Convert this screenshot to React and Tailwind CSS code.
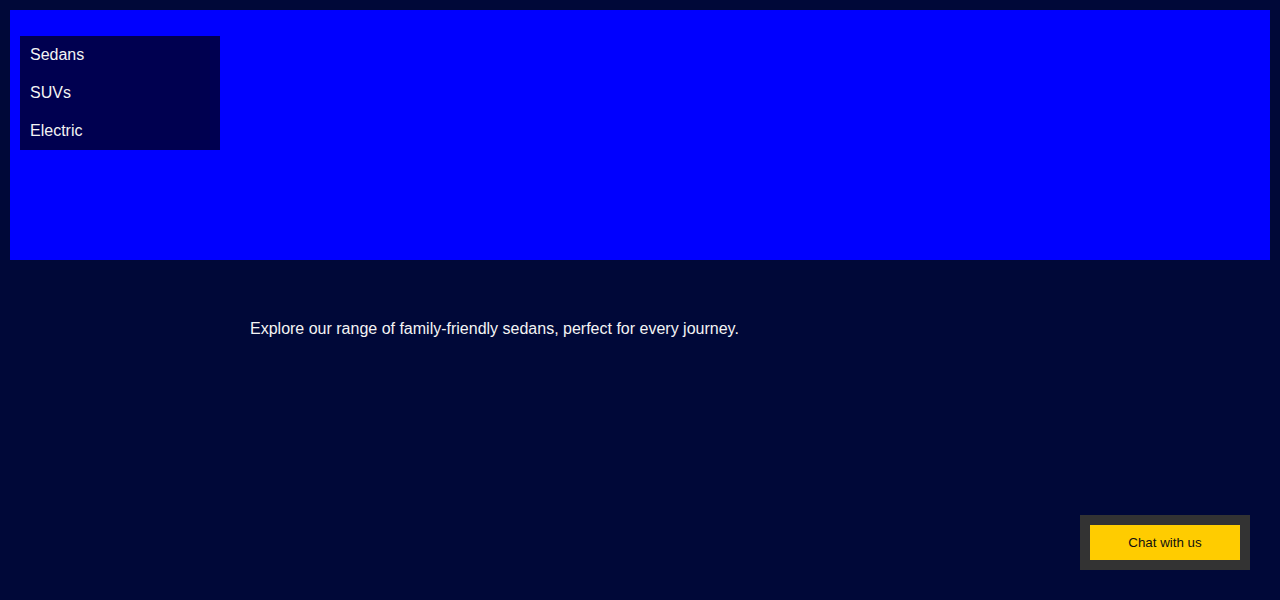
const MENU = ['Sedans', 'SUVs', 'Electric'];

export default function App() {
  return (
    <div className="min-h-[600px] bg-[#000838] p-[10px] font-['Liberation_Sans',Arial,sans-serif] text-[#f4f4f4]">
      <header className="h-[250px] bg-[#0000ff] px-[10px] pt-[26px]">
        <nav className="w-[200px] bg-[#000050]">
          {MENU.map((item) => (
            <div key={item} className="h-[38px] px-[10px] pt-[10px] text-base leading-[18px]">
              {item}
            </div>
          ))}
        </nav>
      </header>

      <main className="pl-[240px] pt-[60px]">
        <p className="text-base leading-[18px]">
          Explore our range of family-friendly sedans, perfect for every journey.
        </p>
      </main>

      <div className="fixed bottom-[30px] right-[30px] bg-[#333333] p-[10px]">
        <button
          type="button"
          className="h-[35px] w-[150px] bg-[#ffcc00] text-[13.333px] text-[#111111]"
        >
          Chat with us
        </button>
      </div>
    </div>
  );
}
